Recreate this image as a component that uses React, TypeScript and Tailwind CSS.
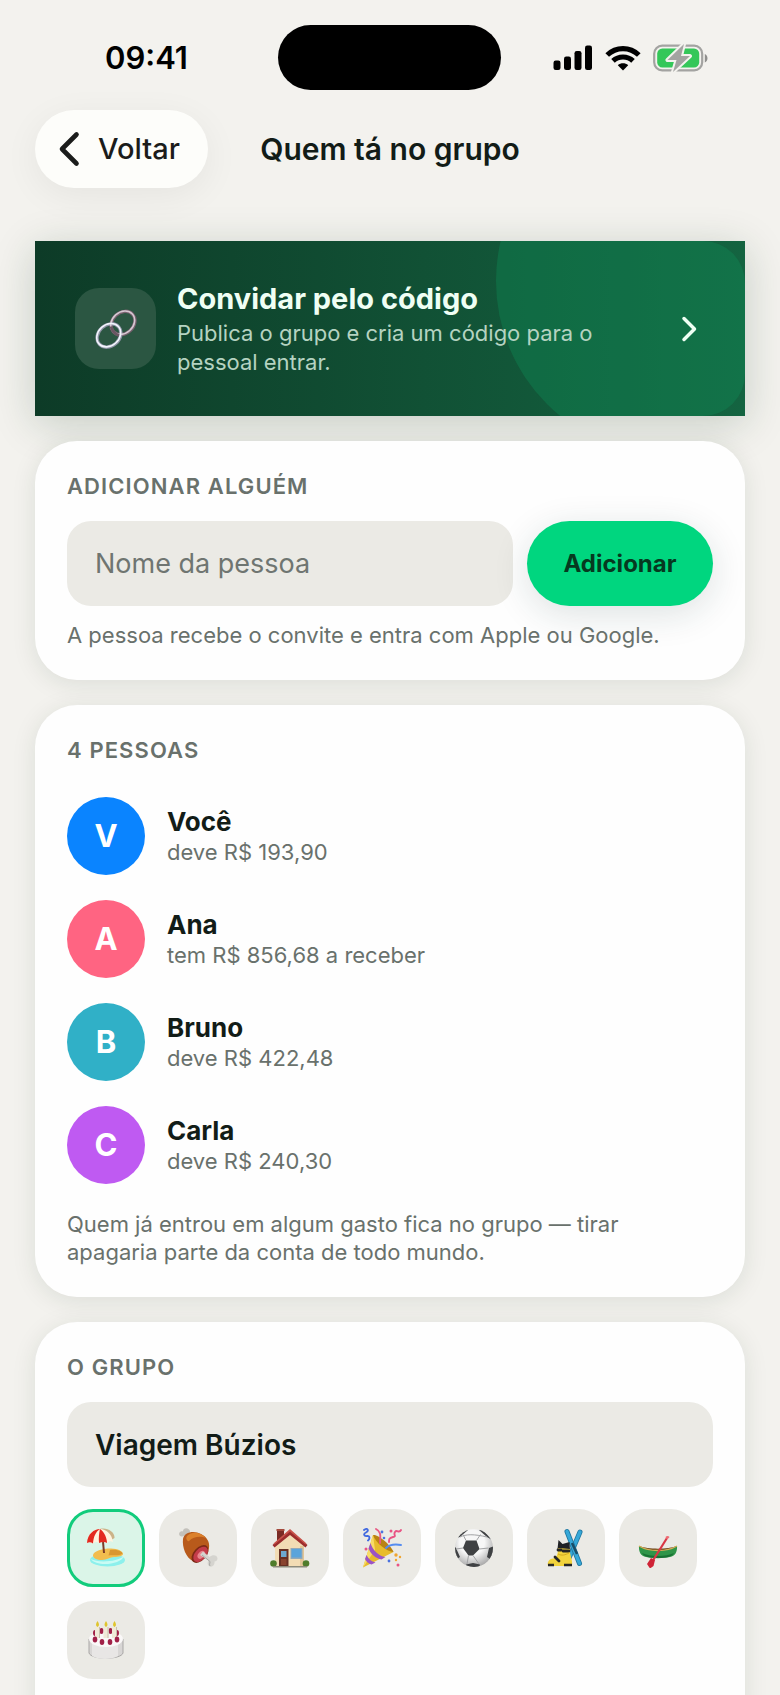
import type { ReactNode } from "react";

const people = [
  { initial: "V", name: "Você", status: "deve R$ 193,90", tint: "bg-[#0a84ff]" },
  { initial: "A", name: "Ana", status: "tem R$ 856,68 a receber", tint: "bg-[#ff6482]" },
  { initial: "B", name: "Bruno", status: "deve R$ 422,48", tint: "bg-[#30b0c7]" },
  { initial: "C", name: "Carla", status: "deve R$ 240,30", tint: "bg-[#bf5af2]" },
];

function SignalIcon() {
  return (
    <svg viewBox="0 0 40 26" className="h-[26px] w-10" aria-hidden="true">
      <rect x="0.5" y="15.5" width="7" height="9.5" rx="2.2" />
      <rect x="11" y="11.5" width="7" height="13.5" rx="2.2" />
      <rect x="21.5" y="6" width="7" height="19" rx="2.2" />
      <rect x="32" y="0.5" width="7" height="24.5" rx="2.2" />
    </svg>
  );
}

function WifiIcon() {
  return (
    <svg viewBox="0 0 36 26" className="h-[26px] w-9" aria-hidden="true">
      <path d="M18 25.5l-5.2-5.2c2.900-2.600 7.500-2.600 10.400 0z" />
      <g fill="none" stroke="#000" strokeWidth="5.2">
        <path d="M8 15.900c5.600-5.200 14.400-5.200 20 0" />
        <path d="M2.200 10c8.900-8.600 22.700-8.600 31.600 0" />
      </g>
    </svg>
  );
}

function BatteryIcon() {
  return (
    <svg viewBox="0 0 56 28" className="h-7 w-14" aria-hidden="true">
      <rect x="1.2" y="1.7" width="48" height="24.6" rx="8" fill="none" stroke="#a3a3a1" strokeWidth="2.2" />
      <path d="M51.8 10v8.5c3.600-1.500 3.600-7 0-8.500z" fill="#8f8f8d" />
      <rect x="4.2" y="4.6" width="42" height="18.8" rx="5.2" fill="#34c759" />
      <path d="M31 0L14.500 16h9l-3.500 12L37 12h-9z" fill="#a3a3a1" stroke="#f3f2ee" strokeWidth="4" strokeLinejoin="round" />
      <path d="M31 0L14.500 16h9l-3.500 12L37 12h-9z" fill="#a3a3a1" />
    </svg>
  );
}

function LinkIcon() {
  return (
    <svg viewBox="0 0 42 42" className="size-[42px]" fill="none" aria-hidden="true">
      <g strokeWidth="3.4">
        <ellipse cx="28" cy="15" rx="13" ry="10.500" transform="rotate(-42 28 15)" stroke="#79616f" />
        <ellipse cx="14" cy="27.500" rx="13" ry="10.500" transform="rotate(-42 14 27.500)" stroke="#8f93a6" />
      </g>
      <g strokeWidth="1.600">
        <ellipse cx="27.700" cy="14.700" rx="13" ry="10.500" transform="rotate(-42 27.700 14.700)" stroke="#d6c9d3" />
        <ellipse cx="13.700" cy="27.200" rx="13" ry="10.500" transform="rotate(-42 13.700 27.200)" stroke="#f2f5fc" />
      </g>
      <path d="M16 18.500c1 4 4 7.500 8 9" stroke="#6a5663" strokeWidth="3" />
    </svg>
  );
}

function BeachIcon() {
  return (
    <svg viewBox="0 0 40 40" className="size-10" aria-hidden="true">
      <ellipse cx="21.5" cy="32" rx="17.5" ry="6.5" fill="#8df0ec" />
      <path d="M5 31c6 4 27 3 33-3-3 9-28 11-33 3z" fill="#c9fbf4" />
      <path d="M7 27c1-4 9-6.500 18-6.500 7 0 12 3 12 5.500 0 2-4 3-9 3-4 0-7 3-12 3s-9.500-2-9-5z" fill="#f2bd4e" />
      <path d="M24 22c6-1 12 1 12.500 3.500-4 3-9 1-14 2z" fill="#d99731" />
      <path d="M16.500 8L18 25" stroke="#7b3b27" strokeWidth="2" />
      <path d="M14 1c7-2 15 3 14.500 9l-4 2.500z" fill="#cbb388" />
      <path d="M1 15C1 7 7 1 14 1c6 0 12 5 13 13-2-1-4-1-6 1-2-1.500-5-1.500-8 0-2-1.500-4-1.500-6 .5-2-1.500-4-1.500-6-.5z" fill="#fff3df" />
      <path d="M14 1C8 1 1.500 6 1 15c2-1 4-1 6 .5C7.500 9 9.500 4 14 1zM14 1c-1 4-1.500 9-1 14 3-1.500 6-1.500 8 0 0-5-2.500-11-7-14z" fill="#e32a20" />
    </svg>
  );
}

function MeatIcon() {
  return (
    <svg viewBox="0 0 40 40" className="size-10" aria-hidden="true">
      <path d="M12 12L6.500 7.500C3 10 0 7.500 1.500 4.500 2.500 3 4.500 3 5 3.500 5 0 9-.5 11 1.500c1.500 1.500 1 3 .5 4L16 9z" fill="#c3c1bb" />
      <path d="M5 11c1-7 11-9 18-5 6 3 9 8 8 14-1 8-10 16-16 13C8 30 4 19 5 11z" fill="#b85a1b" />
      <path d="M9 8c5-5 13-4 19 2-5-2-12-2-17 3-1 1-4-2-2-5z" fill="#dc812b" />
      <ellipse cx="22" cy="26" rx="10.5" ry="6.5" transform="rotate(-48 22 26)" fill="#7d2a16" />
      <ellipse cx="22.6" cy="26.4" rx="9" ry="5.5" transform="rotate(-48 22.6 26.4)" fill="#c43c49" />
      <ellipse cx="23.3" cy="26.8" rx="4.5" ry="3" transform="rotate(-48 23.3 26.8)" fill="#e8858c" />
      <path d="M22 27l3-3.500 6.500 5.500c3-3 8-2 8 1.500 0 2-1.500 3-3 3 .5 4-3 6.500-5.500 4.500-2-1.500-1.500-4-.5-5.500z" fill="#d5d4cf" />
      <path d="M24 27l8 6.500c0 2-1 3 0 4.500" fill="none" stroke="#a9a8a4" strokeWidth="1" />
    </svg>
  );
}

function HouseIcon() {
  return (
    <svg viewBox="0 0 40 40" className="size-10" aria-hidden="true">
      <path d="M7 2h7v14H7z" fill="#7a2b24" />
      <path d="M6.500 1h8v2h-8z" fill="#a44a3c" />
      <path d="M5 17L20 4l14 13v22H5z" fill="#f2dcb4" />
      <path d="M30 18h4v21h-4z" fill="#e2c596" />
      <path d="M20 2l17.500 15-2 2.500L20 7 4.500 19.500l-2-2.500z" fill="#9c2d2d" />
      <path d="M20 1l16.500 14.500-1 1L20 3.500l-15.500 13-1-1z" fill="#c8534a" />
      <rect x="9" y="21" width="9.5" height="18" fill="#673023" />
      <rect x="11" y="23" width="5.5" height="6" fill="#6da9cf" />
      <path d="M11 31h5.500v6H11z" fill="#89432e" />
      <rect x="20.5" y="20" width="12" height="11" fill="#95a9b6" />
      <rect x="21.5" y="21" width="10" height="8.5" fill="#5ba4db" />
      <circle cx="3.5" cy="35.5" r="3.3" fill="#4f7c2b" />
      <circle cx="36" cy="35.5" r="3.3" fill="#4f7c2b" />
      <path d="M3 38h34v1.500H3z" fill="#8d8b7c" />
    </svg>
  );
}

function PartyIcon() {
  return (
    <svg viewBox="0 0 40 40" className="size-10" aria-hidden="true">
      <path d="M1 39.500L11 7c6 1 17 11 20.500 17z" fill="#e8bb2c" />
      <path d="M11 7c5-1 18 10 20.500 17-6 0-18-9-20.500-17z" fill="#b98213" />
      <path d="M11 7L1 39.500 13 22z" fill="#f8db67" />
      <path d="M8.500 15c2 7 8 13 15 14l-4 2.500c-6-1-11-6-13-11zM4.500 27c2 4 5 6.500 9 7.500l-4 2c-3-1-5-2.500-6.500-5.500z" fill="#9b54c5" />
      <g fill="none" strokeLinecap="round" strokeWidth="1.9">
        <path d="M2 2c4-3 5 1 2 2.500s-2 4 1 3.500 3 3 1 4.500" stroke="#4169e0" />
        <path d="M14 1c6 3 4 8 4 14" stroke="#e85a83" />
        <path d="M39 2c-2 4-4-1-6 2s2 4-2 5-4 2-4 5" stroke="#e95484" />
        <path d="M24 20c4-4 9-4 15-3" stroke="#568df0" />
      </g>
      <g fill="#e95484"><circle cx="29" cy="3" r="1.5" /><circle cx="36" cy="37" r="1.5" /><circle cx="4" cy="21" r="1.5" /></g>
      <g fill="#4b72df"><circle cx="20" cy="4" r="1.4" /><circle cx="27" cy="33" r="1.4" /><circle cx="22" cy="10" r="1.3" /></g>
      <g fill="#efa52f"><circle cx="34" cy="27" r="1.7" /><circle cx="38" cy="29" r="1.2" /><circle cx="34" cy="32" r="1.2" /></g>
    </svg>
  );
}

function BallIcon() {
  return (
    <svg viewBox="0 0 40 40" className="size-10" aria-hidden="true">
      <defs>
        <radialGradient id="ball" cx="0.45" cy="0.35" r="0.65">
          <stop offset="0.5" stopColor="#f7f7f7" />
          <stop offset="1" stopColor="#aaaaaa" />
        </radialGradient>
        <clipPath id="ball-edge"><circle cx="20" cy="20" r="19" /></clipPath>
      </defs>
      <circle cx="20" cy="20" r="19" fill="url(#ball)" />
      <g clipPath="url(#ball-edge)" fill="#3f4143">
        <path d="M12 12.500h10.500l3 8.500-6.500 6.500h-4.500L9 20z" />
        <path d="M2 10L10 1l4 1-8 7zM38 12L28 1l-3 1 8 7zM0 18l2 2 4 9-3 2-4-6zM40 18l-5 2-2 9 3 2 4-5zM12 36.500l7-1.500 7 1.500-1 3.500H13z" />
      </g>
      <path d="M12 12.500L9 6.500M22.500 12.500l4-6M9 20l-7 1M25.500 21l9-1M14.500 27.500L13 36M19 27.500L25 36M6 9c6-3 14-3 27 0" stroke="#a2a3a5" strokeWidth="1" fill="none" />
    </svg>
  );
}

function SkiIcon() {
  return (
    <svg viewBox="0 0 40 40" className="size-10" aria-hidden="true">
      <g strokeLinecap="round">
        <path d="M34 4L23 30" stroke="#1f769f" strokeWidth="5" />
        <path d="M34 4L23 30" stroke="#36a8d8" strokeWidth="3.4" />
        <path d="M21 3.500l12.500 32" stroke="#1f769f" strokeWidth="5" />
        <path d="M21 3.500l12.500 32" stroke="#36a8d8" strokeWidth="3.4" />
      </g>
      <path d="M26 15l5 11" stroke="#194c66" strokeWidth="2.5" />
      <path d="M11.500 21l1-9 4 4 7-2 .5 8z" fill="#202225" />
      <path d="M12 20l12 1c-1 5 3 10 2 17H2c-1-4 1-7 5-7.500s5-4.500 5-10.500z" fill="#f2d33c" />
      <path d="M12 22h3M17 23h6M9 29l4 4" stroke="#252525" strokeWidth="2.8" strokeLinecap="round" />
      <path d="M12 26c4 2 7 1 11-1" stroke="#d2a91d" strokeWidth="1" fill="none" />
      <path d="M2 37h6M18 37h8" stroke="#272727" strokeWidth="2.4" />
    </svg>
  );
}

function CanoeIcon() {
  return (
    <svg viewBox="0 0 40 40" className="size-10" aria-hidden="true">
      <path d="M1 18c9 3.500 29 3.500 38 0l-1 3c-9 3-27 3-36 0z" fill="#70451b" />
      <path d="M1 18c10 6 28 6 38 0 .5 6-2 10-7 11-7 1.500-17 1.500-24 0-5-1-7.500-5-7-11z" fill="#2f9549" />
      <path d="M4 25c8 4 24 4 32 0-2 4-8 5-16 5S6 29 4 25z" fill="#197134" />
      <path d="M1 18c10 6 28 6 38 0" fill="none" stroke="#d2ae57" strokeWidth="1.3" />
      <path d="M29 10L14 34" stroke="#d93644" strokeWidth="2.2" />
      <path d="M27.500 9c1-1.500 3-1.500 4 0-.5 1-2 2-3 2z" fill="#ef6b73" />
      <path d="M17 32l-4-2-4 6 3 4.500L15.500 38z" fill="#cf2336" />
    </svg>
  );
}

function CakeIcon() {
  return (
    <svg viewBox="0 0 40 40" className="size-10" aria-hidden="true">
      <path d="M3 19v14c2 7 32 7 34 0V19z" fill="#d8d6d5" stroke="#a9a7a6" strokeWidth="1" />
      <path d="M6 21v15c6 4 20 4 26 0V21z" fill="#e8e6e5" />
      <ellipse cx="20" cy="19" rx="17" ry="8" fill="#faf8f8" />
      <g fill="#a12148">
        <ellipse cx="9" cy="13" rx="2" ry="3" /><ellipse cx="15.5" cy="11" rx="2" ry="3" /><ellipse cx="24.5" cy="11" rx="2" ry="3" /><ellipse cx="31" cy="13" rx="2" ry="3" />
      </g>
      <path d="M9 7h5v11H9zM17.500 7h5v11h-5zM26 7h5v11h-5z" fill="#f0ead8" />
      <path d="M13 7h1v11h-1zM21.500 7h1v11h-1zM30 7h1v11h-1z" fill="#c8bfad" />
      <path d="M11.500 1c2 3 2 5 0 6-2-1-2-3 0-6zM20 1c2 3 2 5 0 6-2-1-2-3 0-6zM28.500 1c2 3 2 5 0 6-2-1-2-3 0-6z" fill="#dfc52e" />
      <g fill="#a12148">
        <ellipse cx="9" cy="19.5" rx="2.3" ry="3" /><ellipse cx="16" cy="22" rx="2.3" ry="3" /><ellipse cx="24" cy="22" rx="2.3" ry="3" /><ellipse cx="31" cy="19.5" rx="2.3" ry="3" />
      </g>
    </svg>
  );
}

const symbols = [
  { label: "Praia", icon: <BeachIcon /> },
  { label: "Churrasco", icon: <MeatIcon /> },
  { label: "Casa", icon: <HouseIcon /> },
  { label: "Festa", icon: <PartyIcon /> },
  { label: "Futebol", icon: <BallIcon /> },
  { label: "Esqui", icon: <SkiIcon /> },
  { label: "Canoa", icon: <CanoeIcon /> },
  { label: "Aniversário", icon: <CakeIcon /> },
];

function Card({ title, children }: { title: ReactNode; children: ReactNode }) {
  return (
    <section className="relative rounded-[42px] bg-[#fefefe] px-8 pt-[31px] pb-[31px] shadow-[0_4px_24px_rgba(20,50,30,0.1)]">
      <h2 className="text-[22px] leading-7 font-semibold tracking-wider text-[#69716c]">{title}</h2>
      {children}
    </section>
  );
}

export default function App() {
  return (
    <div className="h-screen overflow-x-hidden overflow-y-auto bg-[#f3f2ee] font-['Inter',sans-serif] text-[#121c17] [scrollbar-width:none]">
      <div className="grid grid-cols-3 items-center px-[35px] pt-[25px]">
        <time className="pl-[70px] text-[31px] leading-9 font-semibold text-black">09:41</time>
        <div className="mx-auto h-[65px] w-[223px] rounded-full bg-black" />
        <div className="flex items-center justify-end gap-3 pr-9">
          <SignalIcon />
          <WifiIcon />
          <BatteryIcon />
        </div>
      </div>

      <header className="mt-5 grid grid-cols-[1fr_auto_1fr] items-center px-[35px]">
        <button className="flex h-[78px] w-[173px] items-center gap-4 rounded-full bg-[#fdfdfa] pl-[23px] text-[29px] font-medium text-[#1b1c1b] shadow-[0_8px_36px_rgba(0,0,0,0.06)]">
          <svg viewBox="0 0 24 36" className="h-9 w-6" fill="none" stroke="currentColor" strokeWidth="4.6" strokeLinecap="round" strokeLinejoin="round" aria-hidden="true">
            <path d="M18.500 3.500L4 18l14.500 14.500" />
          </svg>
          Voltar
        </button>
        <h1 className="text-[30px] leading-9 font-semibold">Quem tá no grupo</h1>
      </header>

      <main className="mt-[53px] flex flex-col gap-[25px] px-[35px] pb-10">
        <button className="relative flex h-[175px] w-full items-center overflow-hidden bg-linear-to-r from-[#0d3b27] to-[#146441] px-10 text-left shadow-[0_8px_40px_rgba(20,60,35,0.2)]">
          <span className="absolute inset-0 overflow-hidden rounded-[42px]">
            <span className="absolute -top-[134px] -right-[99px] size-[348px] rounded-full bg-[#0f8a55]/40" />
          </span>
          <span className="relative flex size-[81px] shrink-0 items-center justify-center rounded-3xl bg-[#2b5642]">
            <LinkIcon />
          </span>
          <span className="relative ml-[21px] flex-1">
            <span className="block text-[29px] leading-9 font-bold text-[#effff4]">Convidar pelo código</span>
            <span className="mt-0.5 block max-w-[440px] text-[22px] leading-[29px] text-[#b5d3c1]">Publica o grupo e cria um código para o pessoal entrar.</span>
          </span>
          <svg viewBox="0 0 16 26" className="relative mr-2 h-[26px] w-4 shrink-0" fill="none" stroke="#effff4" strokeWidth="3.5" strokeLinecap="round" strokeLinejoin="round" aria-hidden="true">
            <path d="M3 2.500L13.500 13 3 23.500" />
          </svg>
        </button>

        <Card title={<label htmlFor="person">ADICIONAR ALGUÉM</label>}>
          <form className="mt-[21px] flex gap-[14px]" onSubmit={(event) => event.preventDefault()}>
            <input id="person" placeholder="Nome da pessoa" className="h-[85px] min-w-0 flex-1 rounded-3xl bg-[#ebeae5] px-7 text-[27px] outline-none placeholder:text-[#6f7571]" />
            <button className="h-[85px] w-[186px] rounded-full bg-[#00d67f] text-[24px] font-bold text-[#06391f] shadow-[0_8px_36px_rgba(20,60,60,0.14)]">Adicionar</button>
          </form>
          <p className="relative mt-[15px] text-[22px] leading-7 text-[#69716c]">A pessoa recebe o convite e entra com Apple ou Google.</p>
        </Card>

        <Card title="4 PESSOAS">
          <ul className="mt-[33px] flex flex-col gap-[25px]">
            {people.map((person) => (
              <li key={person.name} className="flex items-center gap-[22px]">
                <span className={`flex size-[78px] items-center justify-center rounded-full text-[31px] font-bold text-white ${person.tint}`}>{person.initial}</span>
                <span>
                  <span className="block text-[26px] leading-8 font-bold">{person.name}</span>
                  <span className="block text-[22px] leading-7 text-[#69716c]">{person.status}</span>
                </span>
              </li>
            ))}
          </ul>
          <p className="mt-[26px] max-w-[600px] text-[22px] leading-7 text-[#69716c]">Quem já entrou em algum gasto fica no grupo — tirar apagaria parte da conta de todo mundo.</p>
        </Card>

        <Card title={<label htmlFor="group">O GRUPO</label>}>
          <input id="group" defaultValue="Viagem Búzios" className="mt-[21px] h-[85px] w-full rounded-3xl bg-[#ebeae5] px-7 text-[28px] font-semibold outline-none" />
          <div className="mt-[22px] flex flex-wrap gap-[14px] pb-8">
            {symbols.map((symbol, index) => (
              <button
                key={symbol.label}
                aria-label={symbol.label}
                aria-pressed={index === 0}
                className={`flex size-[78px] items-center justify-center rounded-[26px] ${index === 0 ? "border-[3px] border-[#12cc7c] bg-[#dbf5e8]" : "bg-[#ebeae5]"}`}
              >
                {symbol.icon}
              </button>
            ))}
          </div>
        </Card>
      </main>
    </div>
  );
}
